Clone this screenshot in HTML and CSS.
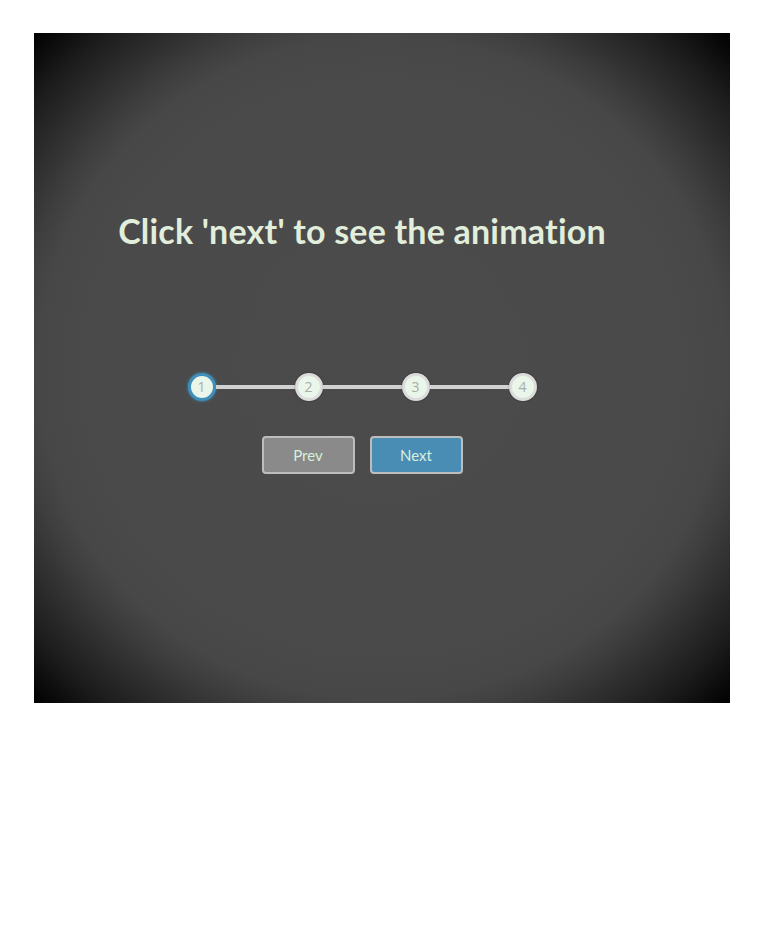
FILE: index.html
```html
<!DOCTYPE html>
<html>
<head>
<meta charset="utf-8">
<link rel="stylesheet" href="styles.css">
</head>
<body>
<div class="stage">
  <div class="content">
    <h1 class="title">Click 'next' to see the animation</h1>
    <div class="steps">
      <div class="step active">1</div>
      <div class="bar"></div>
      <div class="step">2</div>
      <div class="bar"></div>
      <div class="step">3</div>
      <div class="bar"></div>
      <div class="step">4</div>
    </div>
    <div class="buttons">
      <button class="btn prev">Prev</button>
      <button class="btn next">Next</button>
    </div>
  </div>
</div>
</body>
</html>
```
FILE: styles.css
```css
html, body {
  margin: 0;
  padding: 0;
  background: #fff;
}
body {
  padding: 33px 0 0 34px;
}
.stage {
  width: 696px;
  height: 670px;
  background: radial-gradient(ellipse farthest-corner at center, #4b4b4b 0%, #4a4a4a 60%, #474747 70%, #3e3e3e 75%, #1c1c1c 90%, #000 100%);
  box-sizing: border-box;
  padding: 0 40px 0 0;
}
.content {
  display: flex;
  flex-direction: column;
  align-items: center;
  padding-top: 171px;
}
.title {
  margin: 0;
  font-family: Lato, "Liberation Sans", sans-serif;
  font-weight: 700;
  font-size: 34px;
  color: #e2eedc;
  line-height: 54px;
  letter-spacing: 0.2px;
}
.steps {
  display: flex;
  align-items: center;
  margin-top: 115px;
}
.step {
  width: 22px;
  height: 22px;
  border-radius: 50%;
  background: #e9f6e9;
  border: 3px solid #dcdcdc;
  color: #a9aca8;
  font-family: "Open Sans", sans-serif;
  font-size: 14px;
  line-height: 22px;
  text-align: center;
  box-shadow: 0 0 2px rgba(0,0,0,0.4);
}
.step.active {
  border-color: #3f8fba;
  box-shadow: 0 0 3px #3f8fba;
}
.bar {
  width: 79px;
  height: 4px;
  background: #d2d2d2;
}
.buttons {
  display: flex;
  gap: 15px;
  margin-top: 35px;
}
.btn {
  width: 93px;
  height: 38px;
  border: 2px solid #bdbdbd;
  border-radius: 4px;
  font-family: Lato, sans-serif;
  font-size: 15px;
  color: #d8efdc;
  padding: 0;
}
.prev {
  background: #8a8a8a;
}
.next {
  background: #4a8db4;
}
```
